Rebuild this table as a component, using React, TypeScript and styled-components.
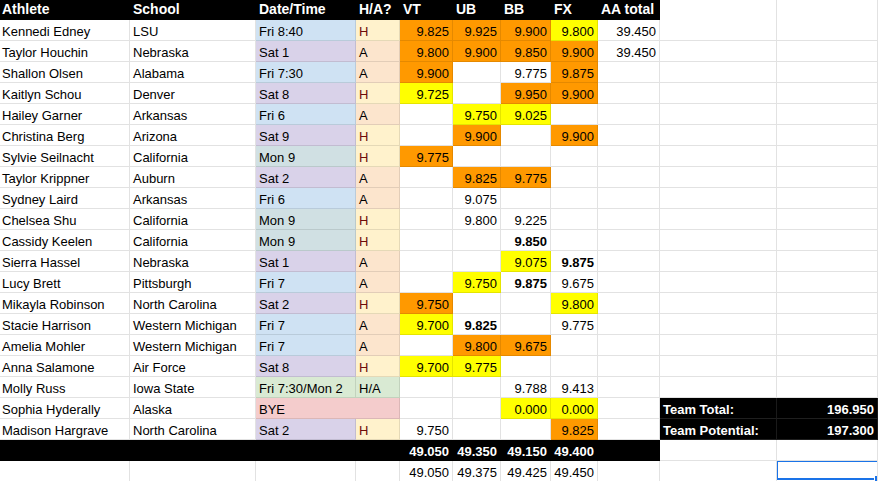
import styled, { createGlobalStyle } from "styled-components";

const GlobalStyle = createGlobalStyle`
  html, body {
    margin: 0;
    padding: 0;
    background: #ffffff;
    overflow: hidden;
  }
`;

const ORANGE = "#ff9900";
const YELLOW = "#ffff00";

const dateColors: Record<string, string> = {
  blue: "#cfe2f3",
  purple: "#d9d2e9",
  teal: "#d0e0e3",
  green: "#d9ead3",
  pink: "#f4cccc",
};

const haColors: Record<string, string> = {
  H: "#fff2cc",
  A: "#fce5cd",
  "H/A": "#d9ead3",
};

type Score = { v: string; bg?: string; bold?: boolean } | null;

interface Athlete {
  name: string;
  school: string;
  date: string;
  dateColor: string;
  ha: string;
  scores: Score[];
  aa?: string;
}

const o = (v: string): Score => ({ v, bg: ORANGE });
const y = (v: string): Score => ({ v, bg: YELLOW });
const p = (v: string): Score => ({ v });
const b = (v: string): Score => ({ v, bold: true });

const athletes: Athlete[] = [
  { name: "Kennedi Edney", school: "LSU", date: "Fri 8:40", dateColor: "blue", ha: "H", scores: [o("9.825"), o("9.925"), o("9.900"), y("9.800")], aa: "39.450" },
  { name: "Taylor Houchin", school: "Nebraska", date: "Sat 1", dateColor: "purple", ha: "A", scores: [o("9.800"), o("9.900"), o("9.850"), o("9.900")], aa: "39.450" },
  { name: "Shallon Olsen", school: "Alabama", date: "Fri 7:30", dateColor: "blue", ha: "A", scores: [o("9.900"), null, p("9.775"), o("9.875")] },
  { name: "Kaitlyn Schou", school: "Denver", date: "Sat 8", dateColor: "purple", ha: "H", scores: [y("9.725"), null, o("9.950"), o("9.900")] },
  { name: "Hailey Garner", school: "Arkansas", date: "Fri 6", dateColor: "blue", ha: "A", scores: [null, y("9.750"), y("9.025"), null] },
  { name: "Christina Berg", school: "Arizona", date: "Sat 9", dateColor: "purple", ha: "H", scores: [null, o("9.900"), null, o("9.900")] },
  { name: "Sylvie Seilnacht", school: "California", date: "Mon 9", dateColor: "teal", ha: "H", scores: [o("9.775"), null, null, null] },
  { name: "Taylor Krippner", school: "Auburn", date: "Sat 2", dateColor: "purple", ha: "A", scores: [null, o("9.825"), o("9.775"), null] },
  { name: "Sydney Laird", school: "Arkansas", date: "Fri 6", dateColor: "blue", ha: "A", scores: [null, p("9.075"), null, null] },
  { name: "Chelsea Shu", school: "California", date: "Mon 9", dateColor: "teal", ha: "H", scores: [null, p("9.800"), p("9.225"), null] },
  { name: "Cassidy Keelen", school: "California", date: "Mon 9", dateColor: "teal", ha: "H", scores: [null, null, b("9.850"), null] },
  { name: "Sierra Hassel", school: "Nebraska", date: "Sat 1", dateColor: "purple", ha: "A", scores: [null, null, y("9.075"), b("9.875")] },
  { name: "Lucy Brett", school: "Pittsburgh", date: "Fri 7", dateColor: "blue", ha: "A", scores: [null, y("9.750"), b("9.875"), p("9.675")] },
  { name: "Mikayla Robinson", school: "North Carolina", date: "Sat 2", dateColor: "purple", ha: "H", scores: [o("9.750"), null, null, y("9.800")] },
  { name: "Stacie Harrison", school: "Western Michigan", date: "Fri 7", dateColor: "blue", ha: "A", scores: [y("9.700"), b("9.825"), null, p("9.775")] },
  { name: "Amelia Mohler", school: "Western Michigan", date: "Fri 7", dateColor: "blue", ha: "A", scores: [null, o("9.800"), o("9.675"), null] },
  { name: "Anna Salamone", school: "Air Force", date: "Sat 8", dateColor: "purple", ha: "H", scores: [y("9.700"), y("9.775"), null, null] },
  { name: "Molly Russ", school: "Iowa State", date: "Fri 7:30/Mon 2", dateColor: "green", ha: "H/A", scores: [null, null, p("9.788"), p("9.413")] },
  { name: "Sophia Hyderally", school: "Alaska", date: "BYE", dateColor: "pink", ha: "", scores: [null, null, y("0.000"), y("0.000")] },
  { name: "Madison Hargrave", school: "North Carolina", date: "Sat 2", dateColor: "purple", ha: "H", scores: [p("9.750"), null, null, o("9.825")] },
];

const teamSummary: Record<number, [string, string]> = {
  18: ["Team Total:", "196.950"],
  19: ["Team Potential:", "197.300"],
};

const headers = ["Athlete", "School", "Date/Time", "H/A?", "VT", "UB", "BB", "FX", "AA total"];
const totals = ["49.050", "49.350", "49.150", "49.400"];
const potentials = ["49.050", "49.375", "49.425", "49.450"];

const App = () => {
  return (
    <Sheet>
      <GlobalStyle />
      <HeaderRow>
        {headers.map((h, i) => (
          <HeaderCell key={h} $first={i === 0}>
            {h}
          </HeaderCell>
        ))}
        <Cell />
        <Cell />
      </HeaderRow>

      {athletes.map((a, i) => {
        const summary = teamSummary[i];
        return (
          <Row key={a.name}>
            <Cell $first>{a.name}</Cell>
            <Cell>{a.school}</Cell>
            {a.date === "BYE" ? (
              <Cell $bg={dateColors[a.dateColor]} $span={2}>
                {a.date}
              </Cell>
            ) : (
              <>
                <Cell $bg={dateColors[a.dateColor]}>{a.date}</Cell>
                <Cell $bg={haColors[a.ha]} $home={a.ha === "H"}>
                  {a.ha}
                </Cell>
              </>
            )}
            {a.scores.map((s, j) => (
              <Cell key={j} $right $bg={s?.bg} $bold={s?.bold}>
                {s?.v}
              </Cell>
            ))}
            <Cell $right>{a.aa}</Cell>
            {summary ? (
              <>
                <SummaryCell>{summary[0]}</SummaryCell>
                <SummaryCell $right>{summary[1]}</SummaryCell>
              </>
            ) : (
              <>
                <Cell />
                <Cell />
              </>
            )}
          </Row>
        );
      })}

      <Row>
        <DarkCell />
        <DarkCell />
        <DarkCell />
        <DarkCell />
        {totals.map((t) => (
          <DarkCell key={t} $right>
            {t}
          </DarkCell>
        ))}
        <DarkCell />
        <Cell />
        <Cell />
      </Row>

      <Row>
        <Cell />
        <Cell />
        <Cell />
        <Cell />
        {potentials.map((t) => (
          <Cell key={t} $right>
            {t}
          </Cell>
        ))}
        <Cell />
        <Cell />
        <Cell>
          <Selection />
        </Cell>
      </Row>
    </Sheet>
  );
};

const columns = "130px 126px 100px 44px 53px 48px 50px 47px 62px 117px 101px";

const Sheet = styled.div`
  width: 878px;
  height: 481px;
  overflow: hidden;
  font-family: "Liberation Sans", Arial, sans-serif;
  font-size: 13px;
  color: #000000;
`;

const Row = styled.div`
  display: grid;
  grid-template-columns: ${columns};
  height: 21px;
`;

const HeaderRow = styled(Row)`
  height: 20px;
`;

const Cell = styled.div<{
  $bg?: string;
  $right?: boolean;
  $bold?: boolean;
  $first?: boolean;
  $span?: number;
  $home?: boolean;
}>`
  position: relative;
  box-sizing: border-box;
  height: 21px;
  padding: 3px 3px 0 ${({ $first }) => ($first ? "2px" : "3px")};
  line-height: 17px;
  white-space: nowrap;
  overflow: hidden;
  background: ${({ $bg }) => $bg ?? "#ffffff"};
  border-right: 1px solid ${({ $bg }) => ($bg ? "rgba(0, 0, 0, 0.1)" : "#e2e2e2")};
  border-bottom: 1px solid ${({ $bg }) => ($bg ? "rgba(0, 0, 0, 0.1)" : "#e2e2e2")};
  text-align: ${({ $right }) => ($right ? "right" : "left")};
  font-weight: ${({ $bold }) => ($bold ? 700 : 400)};
  color: ${({ $home }) => ($home ? "#6e0a0a" : "#000000")};
  grid-column: span ${({ $span }) => $span ?? 1};
`;

const HeaderCell = styled.div<{ $first?: boolean }>`
  box-sizing: border-box;
  height: 20px;
  padding: 1px 3px 0 ${({ $first }) => ($first ? "2px" : "3px")};
  line-height: 17px;
  background: #000000;
  color: #ffffff;
  font-size: 14px;
  font-weight: 700;
  white-space: nowrap;
  overflow: hidden;
`;

const DarkCell = styled(Cell)`
  background: #000000;
  color: #ffffff;
  font-weight: 700;
  border-color: #000000;
`;

const SummaryCell = styled(Cell)`
  background: #000000;
  color: #ffffff;
  font-weight: 700;
  border-right-color: #1a1a1a;
  border-bottom-color: #1f1f1f;
`;

const Selection = styled.div`
  position: absolute;
  left: -1px;
  top: -1px;
  width: 99px;
  height: 16px;
  border: 2px solid #1a73e8;

  &::after {
    content: "";
    position: absolute;
    right: -4px;
    bottom: -4px;
    width: 5px;
    height: 5px;
    background: #1a73e8;
    border: 1px solid #ffffff;
  }
`;

export default App;
